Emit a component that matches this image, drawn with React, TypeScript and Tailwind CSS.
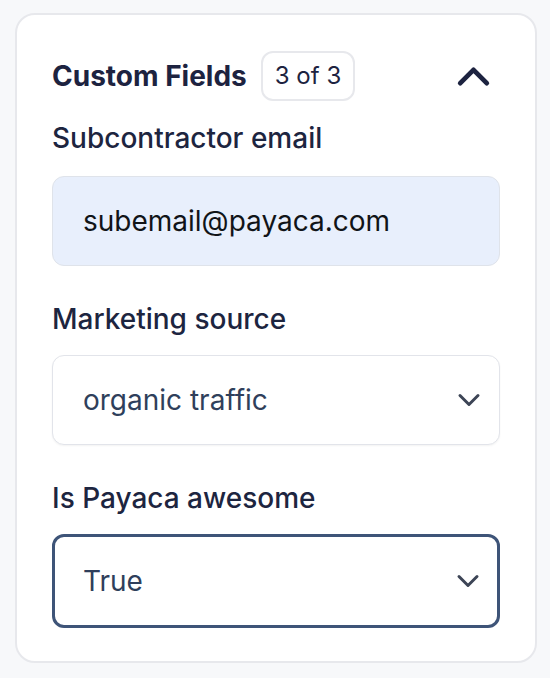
import { ChevronDown, ChevronUp } from 'lucide-react'

const font = { fontFamily: 'Inter, "Noto Sans", sans-serif' }

function Label({ children }: { children: React.ReactNode }) {
  return <div className="text-[28px] font-medium leading-[36px] text-[#1d2540]">{children}</div>
}

function SelectBox({ value, active }: { value: string; active?: boolean }) {
  return (
    <div
      className={
        active
          ? 'flex h-[94px] items-center justify-between rounded-[12px] border-[3px] border-[#3e5478] bg-white pl-[28px] pr-[11px]'
          : 'flex h-[90px] items-center justify-between rounded-[12px] border border-[#e2e4ea] bg-white pl-[30px] pr-[12px] shadow-[0_1px_2px_rgba(0,0,0,0.05)]'
      }
    >
      <span className="text-[28px] text-[#2f3f5b]">{value}</span>
      <ChevronDown className="h-[36px] w-[36px] text-[#3d4556]" strokeWidth={2} />
    </div>
  )
}

export default function App() {
  return (
    <div className="min-h-[678px] bg-[#f7f8fa] pl-[15px] pr-[13px] pt-[13px]" style={font}>
      <div className="rounded-[20px] border-2 border-[#e7e8ec] bg-white px-[35px] pb-[33px] pt-[36px]">
        <div className="flex h-[50px] items-center justify-between">
          <div className="flex items-center gap-[14px]">
            <h2 className="text-[28px] font-bold leading-[36px] text-[#1d2340]">Custom Fields</h2>
            <span className="rounded-[12px] border-2 border-[#e7e8ec] px-[12px] py-[8px] text-[24px] leading-[30px] text-[#1d2340]">
              3 of 3
            </span>
          </div>
          <ChevronUp className="h-[53px] w-[53px] text-[#1d2340]" strokeWidth={2.2} />
        </div>

        <div className="mt-[19px] flex flex-col gap-[20px]">
          <Label>Subcontractor email</Label>
          <div className="flex h-[90px] items-center rounded-[12px] border border-[#dfe3ea] bg-[#e8effc] pl-[30px]">
            <span className="text-[28px] text-[#111418]">subemail@payaca.com</span>
          </div>
        </div>

        <div className="mt-[35px] flex flex-col gap-[18px]">
          <Label>Marketing source</Label>
          <SelectBox value="organic traffic" />
        </div>

        <div className="mt-[35px] flex flex-col gap-[18px]">
          <Label>Is Payaca awesome</Label>
          <SelectBox value="True" active />
        </div>
      </div>
    </div>
  )
}
